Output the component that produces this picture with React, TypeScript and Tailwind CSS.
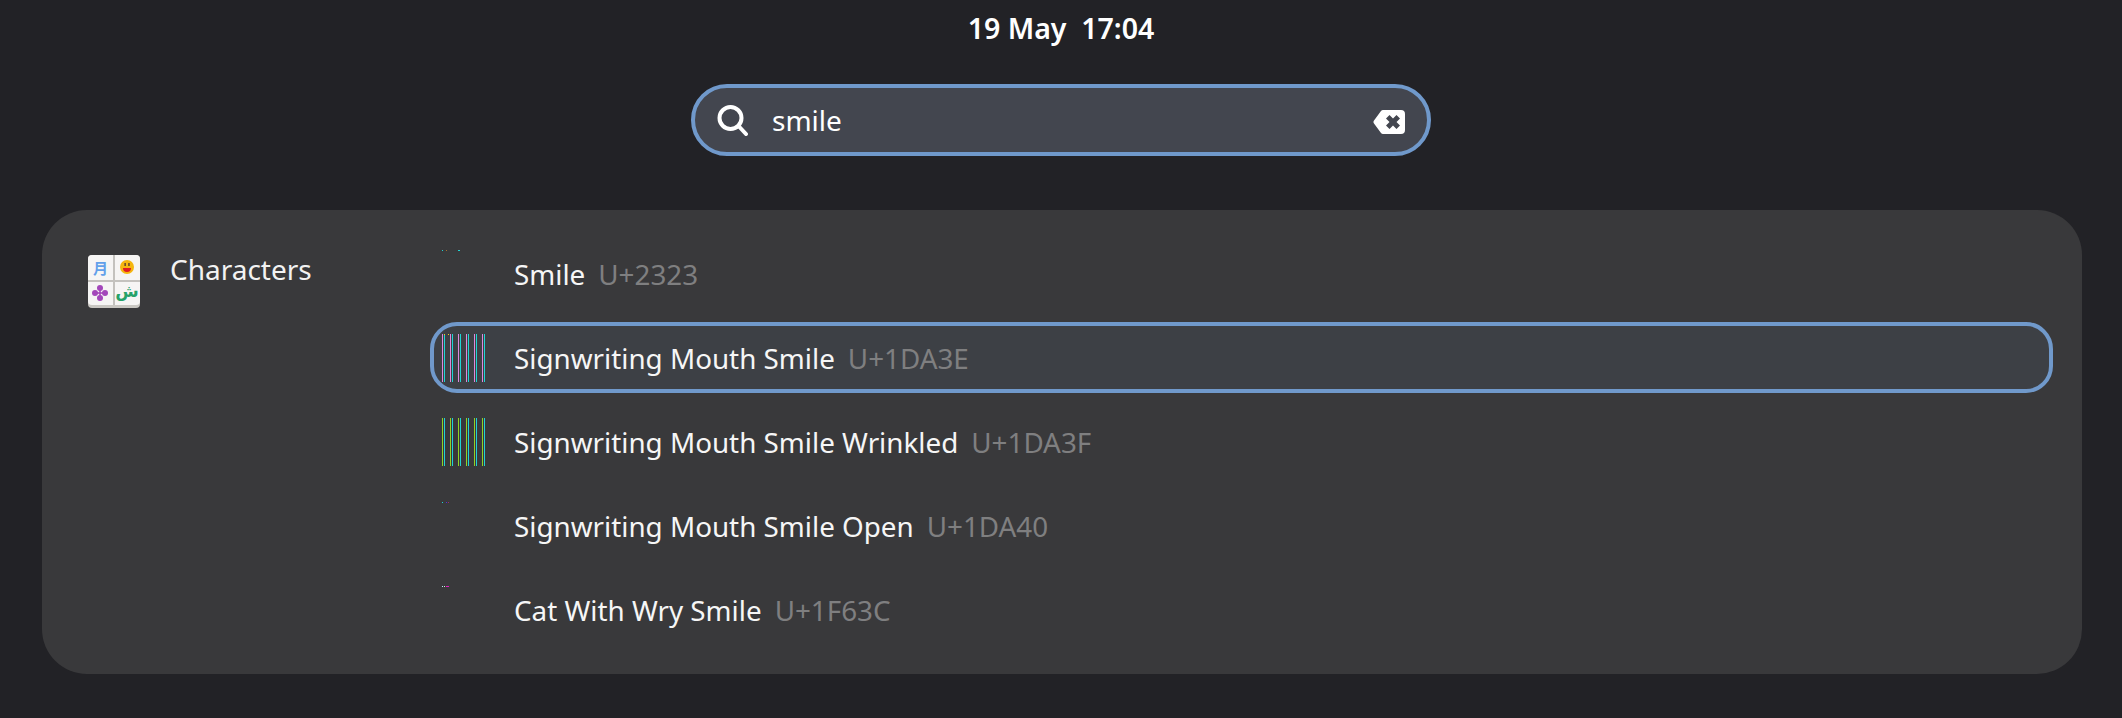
import { Fragment } from 'react';

interface ResultRow {
    name: string;
    code: string;
    selected?: boolean;
    glyph: 'dots-a' | 'bars-pink' | 'bars-lime' | 'dots-b' | 'dots-c';
}

const RESULTS: ResultRow[] = [
    { name: 'Smile', code: 'U+2323', glyph: 'dots-a' },
    { name: 'Signwriting Mouth Smile', code: 'U+1DA3E', glyph: 'bars-pink', selected: true },
    { name: 'Signwriting Mouth Smile Wrinkled', code: 'U+1DA3F', glyph: 'bars-lime' },
    { name: 'Signwriting Mouth Smile Open', code: 'U+1DA40', glyph: 'dots-b' },
    { name: 'Cat With Wry Smile', code: 'U+1F63C', glyph: 'dots-c' },
];

const BAR_X = [0, 8, 16, 24, 32, 40];

function SearchIcon() {
    return (
        <svg width="32" height="32" viewBox="0 0 32 32" fill="none" stroke="#fff" strokeWidth="4">
            <circle cx="14.5" cy="14" r="11" />
            <path d="M23 22.5 L30 30" strokeLinecap="round" />
        </svg>
    );
}

function ClearIcon() {
    return (
        <svg width="32" height="24" viewBox="0 0 32 24">
            <path
                fillRule="evenodd"
                fill="#fff"
                d="M10 0 H28 a4 4 0 0 1 4 4 V20 a4 4 0 0 1 -4 4 H10 a3 3 0 0 1 -2 -1 L1 13.5 a2.5 2.5 0 0 1 0 -3 L8 1 a3 3 0 0 1 2 -1 Z M16.5 5 L13 8.5 L16.5 12 L13 15.5 L16.5 19 L20 15.5 L23.5 19 L27 15.5 L23.5 12 L27 8.5 L23.5 5 L20 8.5 Z"
            />
        </svg>
    );
}

function CharactersIcon() {
    return (
        <svg width="52" height="53" viewBox="0 0 52 53">
            <rect x="0" y="0" width="52" height="53" rx="4" fill="#c9c7c2" />
            <rect x="0" y="0" width="52" height="50" rx="4" fill="#f6f5f4" />
            <rect x="0" y="25" width="52" height="2" fill="#c4c2be" />
            <rect x="25" y="0" width="2" height="50" fill="#c4c2be" />
            <text x="12.5" y="19" textAnchor="middle" fontSize="15" fontWeight="700" fill="#62a0ea" fontFamily="'Noto Sans CJK JP', sans-serif">月</text>
            <circle cx="39" cy="12" r="7" fill="#f5b60f" />
            <path d="M35 13 h8 a4 4 0 0 1 -8 0 Z" fill="#e01b24" />
            <rect x="36.4" y="8" width="1.5" height="3" fill="#63452c" />
            <rect x="40.2" y="8" width="1.5" height="3" fill="#63452c" />
            <g fill="#a347ba">
                <circle cx="12" cy="33" r="3" />
                <circle cx="12" cy="43" r="3" />
                <circle cx="7" cy="38" r="3" />
                <circle cx="17" cy="38" r="3" />
                <rect x="11.2" y="33" width="1.6" height="10" />
                <rect x="7" y="37.2" width="10" height="1.6" />
            </g>
            <text x="39" y="42" textAnchor="middle" fontSize="17" fontWeight="700" fill="#26a269" fontFamily="'DejaVu Sans', sans-serif">ش</text>
        </svg>
    );
}

// the character previews rendered as broken bars and stray dots
function GlyphPreview({ kind }: { kind: ResultRow['glyph'] }) {
    const isBars = kind === 'bars-pink' || kind === 'bars-lime';
    return (
        <svg width="44" height="49" viewBox="0 0 44 49" shapeRendering="crispEdges" className="shrink-0 self-start mt-[8px]">
            {isBars && BAR_X.map(x => (
                <Fragment key={x}>
                    <rect x={x} y="0" width="1" height="48" fill={kind === 'bars-lime' ? '#8fd424' : '#dc8add'} />
                    <rect x={x + 2} y="0" width="1" height="48" fill="#1fd4d4" />
                </Fragment>
            ))}
            {kind === 'bars-pink' && (
                <>
                    <rect x="2" y="0" width="1" height="1" fill="#e8d020" />
                    <rect x="6" y="0" width="1" height="1" fill="#e8d020" />
                </>
            )}
            {kind === 'dots-a' && (
                <>
                    <rect x="0" y="0" width="1" height="1" fill="#1fd4d4" />
                    <rect x="4" y="0" width="1" height="1" fill="#a07030" />
                    <rect x="16" y="0" width="2" height="1" fill="#1fd4d4" />
                </>
            )}
            {kind === 'dots-b' && (
                <>
                    <rect x="0" y="0" width="1" height="1" fill="#1fd4d4" />
                    <rect x="4" y="0" width="1" height="1" fill="#5030e0" />
                    <rect x="6" y="0" width="1" height="1" fill="#a03060" />
                </>
            )}
            {kind === 'dots-c' && (
                <>
                    <rect x="0" y="0" width="1" height="1" fill="#b0f0f0" />
                    <rect x="2" y="0" width="1" height="1" fill="#e0e0e0" />
                    <rect x="4" y="0" width="3" height="1" fill="#e020c0" />
                </>
            )}
        </svg>
    );
}

export default function App() {
    return (
        <div className="h-[718px] w-[2122px] overflow-hidden bg-[#222226] text-white font-['Noto_Sans',sans-serif]">
            {/* Top bar */}
            <div className="h-[56px] flex items-center justify-center text-[28.5px] font-semibold">
                <span className="whitespace-pre">19 May  17:04</span>
            </div>

            {/* Search entry */}
            <div className="mt-[28px] flex justify-center">
                <div className="w-[740px] h-[72px] rounded-full border-4 border-[#7099cb] bg-[#43464f] flex items-center pl-[21px] pr-[22px]">
                    <SearchIcon />
                    <span className="ml-[24px] text-[28px]">smile</span>
                    <span className="ml-auto flex mt-[4px]"><ClearIcon /></span>
                </div>
            </div>

            {/* Results */}
            <div className="mt-[54px] mx-[42px] w-[2040px] rounded-[45px] bg-[#39393b] flex pt-[28px] pb-[29px] pl-[46px] pr-[29px]">
                <div className="w-[342px] shrink-0 flex items-start pt-[17px]">
                    <CharactersIcon />
                    <span className="ml-[30px] -mt-[5px] text-[28px] leading-[38px] text-[#f2f2f2]">Characters</span>
                </div>
                <div className="flex-1 flex flex-col gap-[13px]">
                    {RESULTS.map(row => (
                        <div
                            key={row.code}
                            className={`h-[71px] rounded-[27px] border-4 flex items-center pl-[8px] ${row.selected ? 'border-[#7099cb] bg-[#3d4045]' : 'border-transparent'}`}
                        >
                            <GlyphPreview kind={row.glyph} />
                            <span className="ml-[28px] pt-[3px] text-[27.8px] text-[#f6f6f6]">{row.name}</span>
                            <span className="ml-[13px] pt-[3px] text-[27.8px] text-[#7f7f80]">{row.code}</span>
                        </div>
                    ))}
                </div>
            </div>
        </div>
    );
}
